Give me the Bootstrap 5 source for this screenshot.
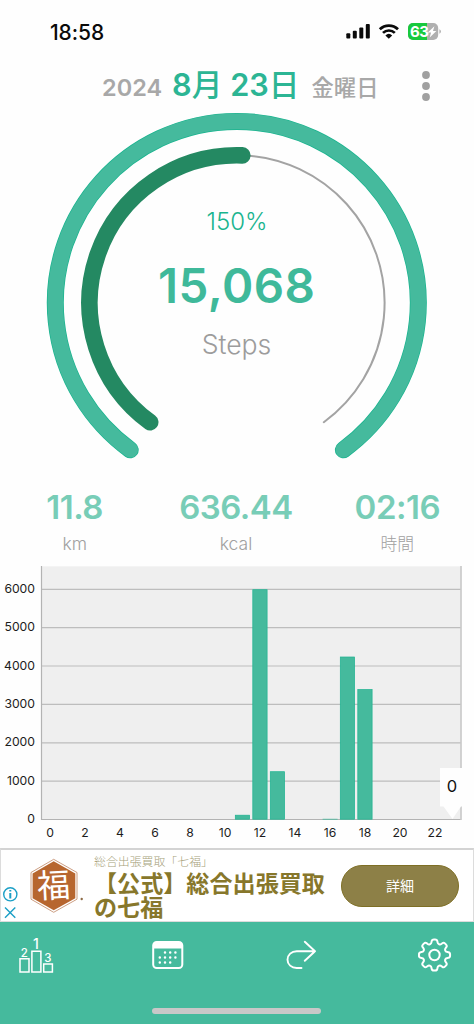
<!DOCTYPE html>
<html lang="ja">
<head>
<meta charset="utf-8">
<meta name="viewport" content="width=device-width, initial-scale=1">
<title>Steps</title>
<link href="https://cdn.jsdelivr.net/npm/bootstrap@5.3.0/dist/css/bootstrap.min.css" rel="stylesheet">
<style>
  :root { --mint: #45ba9d; --gray: #a8a8a8; --gold: #8d8047; }
  body { font-family: Inter, "Noto Sans CJK JP", sans-serif; line-height: 1; background: #fefefe; }
  .screen { width: 474px; height: 1024px; }
  .status { height: 64px; padding: 0 32px 0 50px; color: #0a0a0a; }
  .clock { font-size: 21px; font-weight: 500; letter-spacing: -.1px; }
  .datebar { height: 46px; padding: 6px 43px 0 102px; color: var(--gray); }
  .datebar .year { font-size: 23.5px; font-weight: 600; }
  .datebar .day { font-size: 30.7px; font-weight: 600; color: #2cb594; white-space: pre; margin: 0 12px 0 10px; }
  .datebar .kanji { font-weight: 500; }
  .datebar .week { font-size: 22.3px; font-weight: 500; }
  .gauge { height: 370px; }
  .gauge text, .plot text { text-anchor: middle; }
  .plot .ylab text { text-anchor: end; }
  .stats { height: 86px; margin: 0 -4px 0 -6px; }
  .stats .num { font-size: 33px; font-weight: 600; color: #78cdb7; height: 35px; line-height: 35px; margin-top: 10px; letter-spacing: -.5px; }
  .stats .unit { font-size: 17.5px; font-weight: 300; color: #a0a0a0; line-height: 20px; margin-top: 9px; }
  .stats .cjk { font-size: 16.8px; }
  .plot { height: 282px; }
  .ad { height: 74px; border: 1px solid #dcdcdc; border-width: 2px 1px 1px; border-top-color: #d3d3d3; color: var(--gold); }
  .ad .marks { width: 20px; padding-top: 36px; }
  .ad .seal { width: 61px; margin-left: 8px; }
  .ad .lead-line { font-size: 11.9px; font-weight: 300; line-height: 14px; color: #a79f7b; margin-top: 5px; }
  .ad .headline { font-size: 23.1px; font-weight: 700; line-height: 24.5px; width: 238px; color: #87772b; margin-top: 2.5px; }
  .ad .more { width: 118px; height: 42px; background: var(--gold); color: #fff; font-size: 14px; font-weight: 400; border: 1px solid #7e6f25; margin-right: 14px; }
  .tabs { height: 102px; background: var(--mint); }
  .tabs .icons { height: 66px; padding: 0 22px 0 18px; }
  .tabs .shift { margin-left: -4px; }
  .home { width: 169px; height: 6px; background: #c8c8c8; margin: 20px 0 0 152px; }
</style>
</head>
<body>
<div class="screen d-flex flex-column overflow-hidden mx-auto">

  <header class="status d-flex align-items-center justify-content-between flex-shrink-0">
    <span class="clock">18:58</span>
    <svg width="96" height="20" viewBox="346 22 96 20">
      <g fill="#0a0a0a">
        <rect x="346.3" y="33.2" width="4" height="5.4" rx="1"/><rect x="352.8" y="30.8" width="4" height="7.8" rx="1"/>
        <rect x="359.3" y="27.5" width="4" height="11.1" rx="1"/><rect x="365.8" y="24" width="4" height="14.6" rx="1"/>
        <path d="M385.4 35.4a5 5 0 0 1 6.8 0L388.8 38.8z"/>
      </g>
      <g fill="none" stroke="#0a0a0a" stroke-width="2.7">
        <path d="M379.8 29.3a12.9 12.9 0 0 1 18.2 0M383 32.9a8.4 8.4 0 0 1 11.8 0"/>
      </g>
      <rect x="408" y="23" width="30.2" height="17" rx="5" fill="#b0b0b0"/>
      <path d="M427 23v17h-14a5 5 0 0 1-5-5v-7a5 5 0 0 1 5-5z" fill="#18c93d"/>
      <path d="M439.4 29.2q1.6.7 1.6 2.3t-1.6 2.3z" fill="#b0b0b0"/>
      <text x="419.2" y="37" text-anchor="middle" font-size="15" font-weight="700" fill="#fff" letter-spacing="-.6">63</text>
      <path d="M434.4 26.3l-6.6 6.3h3.3l-1.4 4.9 6.7-6.5H433z" fill="#fff"/>
    </svg>
  </header>

  <div class="datebar d-flex align-items-baseline flex-shrink-0">
    <span class="year">2024</span>
    <span class="day">8<span class="kanji">月</span> 23<span class="kanji">日</span></span>
    <span class="week">金曜日</span>
    <svg class="ms-auto align-self-start" width="10" height="32" viewBox="0 0 10 32" fill="#a0a0a0"><circle cx="5" cy="5" r="3.9"/><circle cx="5" cy="16" r="3.9"/><circle cx="5" cy="27" r="3.9"/></svg>
  </div>

  <svg class="gauge flex-shrink-0" width="474" height="370" viewBox="0 110 474 370">
    <g fill="none" stroke-linecap="round">
      <path d="M130.2 449.8A181.5 181.5 0 1 1 343.4 449.8" stroke="#19b48f" stroke-width="17"/>
      <path d="M130.2 449.8A181.5 181.5 0 1 1 343.4 449.8" stroke="#45ba9d" stroke-width="15.6"/>
      <path d="M150.2 422.2A147.6 147.6 0 1 1 323.8 422.2" stroke="#a3a3a3" stroke-width="2"/>
      <path d="M150.2 422.2A147.6 147.6 0 0 1 242.3 155.4" stroke="#248962" stroke-width="16.6"/>
    </g>
    <text x="237" y="229.5" font-size="24" font-weight="300" fill="#19b48f">150%</text>
    <text x="236.7" y="303" font-size="47.5" font-weight="600" letter-spacing=".4" fill="#3fb99a">15,068</text>
    <text x="236.5" y="353.5" font-size="26.6" font-weight="300" fill="#9c9c9c">Steps</text>
  </svg>

  <div class="stats row g-0 text-center flex-shrink-0">
    <div class="col"><div class="num">11.8</div><div class="unit">km</div></div>
    <div class="col"><div class="num">636.44</div><div class="unit">kcal</div></div>
    <div class="col"><div class="num">02:16</div><div class="unit cjk">時間</div></div>
  </div>

  <svg class="plot flex-shrink-0" width="474" height="282" viewBox="0 566 474 282">
    <rect x="41" y="566.3" width="420.5" height="253.2" fill="#efefef"/>
    <path d="M41 589.3H461M41 627.6H461M41 666H461M41 704.4H461M41 742.8H461M41 781.2H461" stroke="#bdbdbd" stroke-width="1.2"/>
    <path d="M41.5 566V819.5H461" fill="none" stroke="#b3b3b3" stroke-width="1.2"/>
    <path d="M461 566V820" stroke="#c8c8c8" stroke-width="1.6"/>
    <g fill="#45ba9d" stroke="#1eb391" stroke-width=".7">
      <rect x="235.3" y="815.2" width="14.3" height="4"/>
      <rect x="252.8" y="589.7" width="14.3" height="229.5"/>
      <rect x="270.3" y="771.7" width="14.3" height="47.5"/>
      <rect x="340.3" y="657" width="14.3" height="162.2"/>
      <rect x="357.8" y="689.5" width="14.3" height="129.7"/>
    </g>
    <rect x="322.6" y="818.8" width="15" height=".8" fill="#45ba9d"/>
    <g font-size="12.2" fill="#1c1c1c">
      <g class="ylab">
        <text x="35" y="593">6000</text><text x="35" y="631.3">5000</text><text x="35" y="669.7">4000</text>
        <text x="35" y="708">3000</text><text x="35" y="746.4">2000</text><text x="35" y="784.8">1000</text><text x="35" y="823.2">0</text>
      </g>
      <text x="50" y="836.6">0</text><text x="85" y="836.6">2</text><text x="120" y="836.6">4</text><text x="155" y="836.6">6</text>
      <text x="190" y="836.6">8</text><text x="225" y="836.6">10</text><text x="260" y="836.6">12</text><text x="295" y="836.6">14</text>
      <text x="330" y="836.6">16</text><text x="365" y="836.6">18</text><text x="400" y="836.6">20</text><text x="435" y="836.6">22</text>
    </g>
    <path d="M440 768H474V806.5H461L452.5 819L443.5 806.5H440z" fill="#fefefe"/>
    <text x="452" y="792" font-size="16.5" fill="#111">0</text>
  </svg>

  <section class="ad d-flex bg-white flex-shrink-0">
    <div class="marks">
      <svg width="20" height="36" viewBox="0 0 20 36" fill="none" stroke="#1b9fc6" stroke-width="1.4">
        <circle cx="9.3" cy="8.3" r="6.6"/><path d="M9.3 7v5.4M9.3 4v1.6" stroke-width="2"/><path d="M4 21.5l10.3 10.3M14.3 21.5L4 31.8"/>
      </svg>
    </div>
    <svg class="seal" width="61" height="70" viewBox="29 851 61 70">
      <path d="M53.7 860.3L77 873.5V900.2L53.7 913.3L31 900.2V873.5z" fill="#fff" stroke="#c69375" stroke-width=".9"/>
      <path d="M53.7 862.3L75.3 874.5V899.2L53.7 911.3L32.6 899.2V874.5z" fill="#b7662f"/>
      <text x="53.7" y="898.5" font-size="33" text-anchor="middle" fill="#fff" font-weight="400" transform="rotate(-3 53.7 887)">福</text>
      <circle cx="81.7" cy="900" r="1.2" fill="#8d6b47"/>
    </svg>
    <div class="ms-1">
      <div class="lead-line">総合出張買取「七福」</div>
      <div class="headline">【公式】総合出張買取の七福</div>
    </div>
    <button class="more btn rounded-pill p-0 ms-auto align-self-center">詳細</button>
  </section>

  <nav class="tabs flex-shrink-0">
    <div class="icons d-flex justify-content-between align-items-center">
      <svg width="36" height="46" viewBox="18 932 36 46">
        <g fill="none" stroke="#fff" stroke-width="1.5"><path d="M20 958.7h9v13.3h-9zM31.900 951.2h9v20.8h-9zM43.700 963.9h8.700v8.100h-8.700z"/></g>
        <g fill="#fff" font-size="11.5" font-weight="500" text-anchor="middle"><text x="24.3" y="956.5">2</text><text x="35.9" y="949" font-size="14">1</text><text x="47.9" y="961.7">3</text></g>
      </svg>
      <svg class="shift" width="34" height="30" viewBox="152 940 34 30">
        <rect x="153.2" y="942" width="29.1" height="26" rx="3.5" fill="none" stroke="#fff" stroke-width="2"/>
        <path d="M153 948.5v-3q0-3.5 3.5-3.5h22.300q3.5 0 3.5 3.5v3z" fill="#fff"/>
        <g stroke="#fff" stroke-width="2.5" stroke-linecap="round" stroke-dasharray="0 5.2"><path d="M165 952.5h10.800M159.800 957.5h16M159.800 962.5h10.800"/></g>
      </svg>
      <svg class="shift" width="32" height="32" viewBox="284 940 32 32" fill="none" stroke="#fff" stroke-width="1.9" stroke-linecap="round" stroke-linejoin="round">
        <path d="M301.500 969h-4.800c-5.200 0-9.200-3.500-9.200-8.300s4-8.500 9.200-8.500H315M304.800 942.800L315 952.200L304.800 961.800"/>
      </svg>
      <svg width="34" height="34" viewBox="-16.5 -17 34 34" fill="none" stroke="#fff" stroke-width="2" stroke-linejoin="round">
        <circle r="5.2"/>
        <path id="gear"/>
      </svg>
    </div>
    <div class="home rounded-pill"></div>
  </nav>
</div>
<script>
  // Eight-toothed cog outline: four corners per tooth, rounded with quadratic curves
  const pts = [];
  for (let i = 0; i < 8; i++) {
    [[-15.5, 11.8], [-9.5, 15.8], [9.5, 15.8], [15.5, 11.8]].forEach(([a, r]) => {
      const t = (i * 45 + a) * Math.PI / 180;
      pts.push([r * Math.sin(t), -r * Math.cos(t)]);
    });
  }
  const mix = (p, q, k) => [p[0] + (q[0] - p[0]) * k, p[1] + (q[1] - p[1]) * k].map(v => v.toFixed(2)).join(' ');
  let d = '';
  pts.forEach((p, i) => {
    const prev = pts[(i + pts.length - 1) % pts.length], next = pts[(i + 1) % pts.length];
    d += (i ? 'L' : 'M') + mix(p, prev, .4) + 'Q' + mix(p, p, 0) + ' ' + mix(p, next, .4);
  });
  document.getElementById('gear').setAttribute('d', d + 'Z');
</script>
<script src="https://cdn.jsdelivr.net/npm/bootstrap@5.3.0/dist/js/bootstrap.bundle.min.js"></script>
</body>
</html>
